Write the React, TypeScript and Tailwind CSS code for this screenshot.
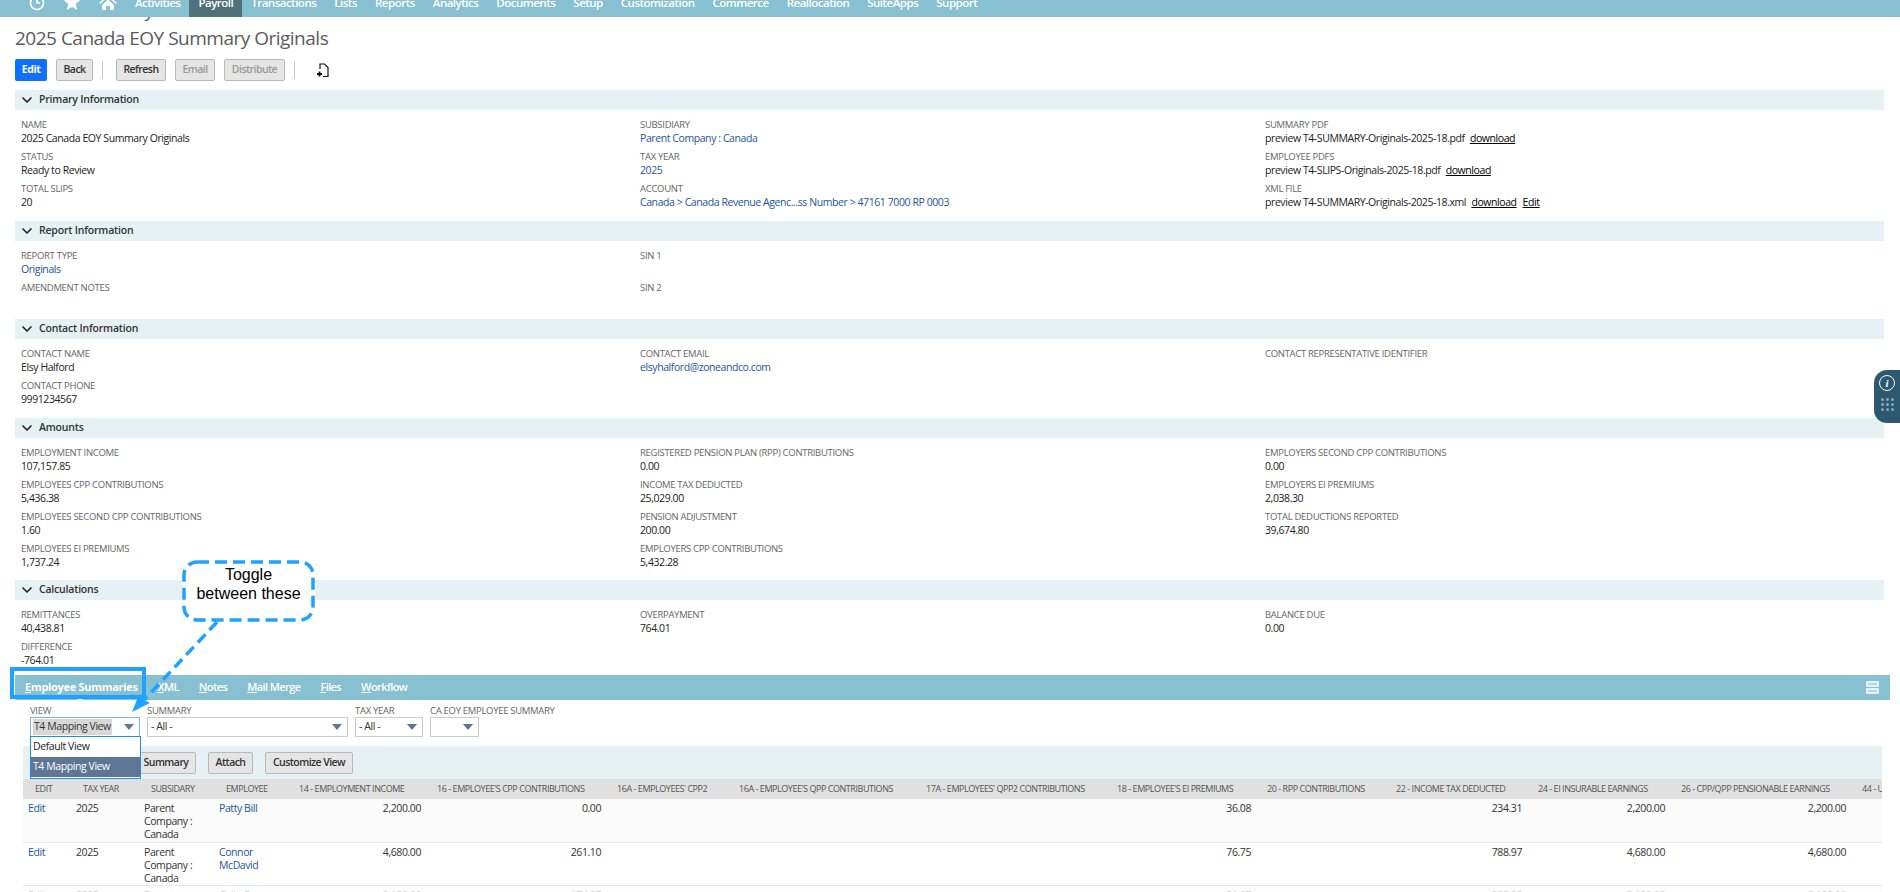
import { ChevronDown } from "lucide-react";

const font = { fontFamily: '"Open Sans", sans-serif' };

const navItems = [
  "Activities",
  "Payroll",
  "Transactions",
  "Lists",
  "Reports",
  "Analytics",
  "Documents",
  "Setup",
  "Customization",
  "Commerce",
  "Reallocation",
  "SuiteApps",
  "Support",
];

type Field = { label: string; value?: React.ReactNode; link?: boolean };

const Dl = ({ name }: { name: string }) => (
  <span className="ml-[3px] text-black underline">{name}</span>
);

const primary: Field[][] = [
  [
    { label: "NAME", value: "2025 Canada EOY Summary Originals" },
    { label: "STATUS", value: "Ready to Review" },
    { label: "TOTAL SLIPS", value: "20" },
  ],
  [
    { label: "SUBSIDIARY", value: "Parent Company : Canada", link: true },
    { label: "TAX YEAR", value: "2025", link: true },
    { label: "ACCOUNT", value: "Canada > Canada Revenue Agenc...ss Number > 47161 7000 RP 0003", link: true },
  ],
  [
    { label: "SUMMARY PDF", value: <>preview T4-SUMMARY-Originals-2025-18.pdf <Dl name="download" /></> },
    { label: "EMPLOYEE PDFS", value: <>preview T4-SLIPS-Originals-2025-18.pdf <Dl name="download" /></> },
    {
      label: "XML FILE",
      value: (
        <>
          preview T4-SUMMARY-Originals-2025-18.xml <Dl name="download" />
          <span className="ml-[6px] text-black underline">Edit</span>
        </>
      ),
    },
  ],
];

const report: Field[][] = [
  [{ label: "REPORT TYPE", value: "Originals", link: true }, { label: "AMENDMENT NOTES" }],
  [{ label: "SIN 1" }, { label: "SIN 2" }],
  [],
];

const contact: Field[][] = [
  [{ label: "CONTACT NAME", value: "Elsy Halford" }, { label: "CONTACT PHONE", value: "9991234567" }],
  [{ label: "CONTACT EMAIL", value: "elsyhalford@zoneandco.com", link: true }],
  [{ label: "CONTACT REPRESENTATIVE IDENTIFIER" }],
];

const amounts: Field[][] = [
  [
    { label: "EMPLOYMENT INCOME", value: "107,157.85" },
    { label: "EMPLOYEES CPP CONTRIBUTIONS", value: "5,436.38" },
    { label: "EMPLOYEES SECOND CPP CONTRIBUTIONS", value: "1.60" },
    { label: "EMPLOYEES EI PREMIUMS", value: "1,737.24" },
  ],
  [
    { label: "REGISTERED PENSION PLAN (RPP) CONTRIBUTIONS", value: "0.00" },
    { label: "INCOME TAX DEDUCTED", value: "25,029.00" },
    { label: "PENSION ADJUSTMENT", value: "200.00" },
    { label: "EMPLOYERS CPP CONTRIBUTIONS", value: "5,432.28" },
  ],
  [
    { label: "EMPLOYERS SECOND CPP CONTRIBUTIONS", value: "0.00" },
    { label: "EMPLOYERS EI PREMIUMS", value: "2,038.30" },
    { label: "TOTAL DEDUCTIONS REPORTED", value: "39,674.80" },
  ],
];

const calculations: Field[][] = [
  [{ label: "REMITTANCES", value: "40,438.81" }, { label: "DIFFERENCE", value: "-764.01" }],
  [{ label: "OVERPAYMENT", value: "764.01" }],
  [{ label: "BALANCE DUE", value: "0.00" }],
];

const columns = [
  { title: "EDIT", w: "w-[48px]" },
  { title: "TAX YEAR", w: "w-[68px]" },
  { title: "SUBSIDARY", w: "w-[75px]" },
  { title: "EMPLOYEE", w: "w-[73px]" },
  { title: "14 - EMPLOYMENT INCOME", w: "w-[138px]" },
  { title: "16 - EMPLOYEE'S CPP CONTRIBUTIONS", w: "w-[180px]" },
  { title: "16A - EMPLOYEES' CPP2", w: "w-[122px]" },
  { title: "16A - EMPLOYEE'S QPP CONTRIBUTIONS", w: "w-[187px]" },
  { title: "17A - EMPLOYEES' QPP2 CONTRIBUTIONS", w: "w-[191px]" },
  { title: "18 - EMPLOYEE'S EI PREMIUMS", w: "w-[150px]" },
  { title: "20 - RPP CONTRIBUTIONS", w: "w-[129px]" },
  { title: "22 - INCOME TAX DEDUCTED", w: "w-[142px]" },
  { title: "24 - EI INSURABLE EARNINGS", w: "w-[143px]" },
  { title: "26 - CPP/QPP PENSIONABLE EARNINGS", w: "w-[181px]" },
  { title: "44 - UNION DUES", w: "w-[100px]" },
];

const rows = [
  { name: "Patty Bill", vals: ["2,200.00", "0.00", "", "", "", "36.08", "", "234.31", "2,200.00", "2,200.00"], bg: "bg-[#fafafa]" },
  { name: "Connor McDavid", vals: ["4,680.00", "261.10", "", "", "", "76.75", "", "788.97", "4,680.00", "4,680.00"], bg: "bg-white" },
  { name: "Colin Fraser", vals: ["3,120.00", "174.07", "", "", "", "51.17", "", "525.98", "3,120.00", "3,120.00"], bg: "bg-[#fafafa] opacity-25" },
];

const Section = ({ title, fields, height }: { title: string; fields: Field[][]; height: string }) => (
  <div>
    <div className="flex h-[20px] items-center bg-[#e6f1f3] pl-[4px] text-[10.5px] font-semibold tracking-[-0.2px] text-[#333]">
      <ChevronDown size={16} strokeWidth={2.5} className="mr-[4px] text-[#222]" />
      {title}
    </div>
    <div className={`grid grid-cols-[619px_625px_1fr] pl-[6px] pt-[8px] ${height}`}>
      {fields.map((col, i) => (
        <div key={i}>
          {col.map((f) => (
            <div key={f.label} className="h-[32px]">
              <div className="h-[13px] text-[9.5px] leading-[13px] tracking-[-0.3px] text-[#666]">{f.label}</div>
              <div className={`h-[14px] text-[10.5px] leading-[14px] tracking-[-0.42px] ${f.link ? "text-[#255599]" : "text-[#222]"}`}>
                {f.value}
              </div>
            </div>
          ))}
        </div>
      ))}
    </div>
  </div>
);

const Btn = ({ label, w, disabled }: { label: string; w: string; disabled?: boolean }) => (
  <button
    className={`block h-[22px] shrink-0 rounded-[2px] border border-[#b9b9b9] bg-[#e5e5e5] text-[10.5px] font-semibold tracking-[-0.55px] ${w} ${
      disabled ? "text-[#999]" : "text-[#333]"
    }`}
  >
    {label}
  </button>
);

const Select = ({ label, value, w, focused }: { label: string; value: string; w: string; focused?: boolean }) => (
  <div className={w}>
    <div className="h-[12px] whitespace-nowrap text-[9.5px] leading-[12px] tracking-[-0.3px] text-[#666]">{label}</div>
    <div
      className={`flex h-[20px] items-center justify-between border pl-[2px] pr-[5px] text-[10.5px] tracking-[-0.42px] text-[#333] ${
        focused ? "border-[#7fb5e6]" : "border-[#ccc]"
      }`}
    >
      <span className={focused ? "bg-[#d8d8d8] px-[1px]" : "px-[1px]"}>{value}</span>
      <svg width="10" height="6" viewBox="0 0 10 6">
        <path d="M0 0h10L5 6z" fill="#5f7596" />
      </svg>
    </div>
  </div>
);

export default function App() {
  return (
    <div style={font} className="relative h-[892px] w-[1900px] overflow-hidden bg-white">
      {/* top nav, scrolled so it is cut off at the top */}
      <div className="flex h-[17px] items-end bg-[#86c0d1] pl-[29px] text-white">
        <div className="flex w-[97px] items-end gap-[19px] pb-[4px]">
          <svg width="16" height="16" viewBox="0 0 16 16" fill="none" stroke="white" strokeWidth="1.6">
            <circle cx="8" cy="6" r="6.500" />
            <path d="M8 2v4h3" />
          </svg>
          <svg width="16" height="16" viewBox="0 0 16 16" fill="white" className="overflow-visible">
            <path d="M8-3l2.400 5.600 6 .5-4.600 4 1.400 5.900L8 9.900l-5.200 3.100 1.400-5.900-4.600-4 6-.5z" />
          </svg>
          <svg width="18" height="16" viewBox="0 0 18 16" fill="white" className="overflow-visible">
            <path d="M9-2L0 6l1 1 8-7 8 7 1-1zM3 8v5h4V9h4v4h4V8L9 2.500z" />
          </svg>
        </div>
        <div className="flex items-end text-[11.5px] font-semibold leading-[16px] tracking-[-0.5px]">
          {navItems.map((item) => (
            <div
              key={item}
              className={
                item === "Payroll"
                  ? "h-[17px] shrink-0 bg-[#4f727a] px-[9px] pb-[6px]"
                  : "shrink-0 px-[9px] pb-[6px]"
              }
            >
              <div className="flex h-[11px] items-end">{item}</div>
            </div>
          ))}
        </div>
      </div>

      {/* breadcrumb hidden behind the nav, only its descender shows */}
      <div className="h-[4px] overflow-hidden pl-[33px]">
        <div className="-mt-[21px] whitespace-nowrap text-[19px] leading-[28px] tracking-[-0.5px] text-[#4a5a78]">EOY Summary</div>
      </div>

      <h1 className="ml-[15px] mt-[3px] h-[28px] text-[19px] font-normal leading-[28px] tracking-[-0.5px] text-[#5a5a5a]">
        2025 Canada EOY Summary Originals
      </h1>

      <div className="ml-[15px] mt-[7px] flex h-[22px] items-center">
        <button className="block h-[22px] w-[32px] rounded-[2px] bg-[#0f6fff] text-[10.5px] font-bold tracking-[-0.4px] text-white">Edit</button>
        <div className="ml-[9px]"><Btn label="Back" w="w-[37px]" /></div>
        <div className="ml-[9px] mr-[13px] h-[18px] w-px bg-[#ccc]" />
        <Btn label="Refresh" w="w-[50px]" />
        <div className="ml-[9px]"><Btn label="Email" w="w-[40px]" disabled /></div>
        <div className="ml-[9px]"><Btn label="Distribute" w="w-[61px]" disabled /></div>
        <div className="ml-[9px] h-[18px] w-px bg-[#ccc]" />
        <svg className="ml-[21px]" width="13" height="15" viewBox="0 0 13 15" fill="none" stroke="#111" strokeWidth="1.2">
          <path d="M4 6V1h4.500l3.500 3.500V13.500H7" />
          <path d="M3.500 8.500v5M1 11h5" strokeWidth="1.800" />
        </svg>
      </div>

      <div className="ml-[15px] mr-[16px] mt-[9px]">
        <Section title="Primary Information" fields={primary} height="h-[111px]" />
        <Section title="Report Information" fields={report} height="h-[78px]" />
        <Section title="Contact Information" fields={contact} height="h-[79px]" />
        <Section title="Amounts" fields={amounts} height="h-[142px]" />
        <Section title="Calculations" fields={calculations} height="h-[75px]" />
      </div>

      {/* sublist tabs */}
      <div className="relative ml-[15px] mr-[10px] flex h-[25px] items-center justify-between bg-[#86c0d1] pl-[10px] pr-[11px] text-[11px] font-semibold tracking-[-0.6px] text-white">
        <div className="flex gap-[20px]">
          <span className="font-bold tracking-[-0.3px]"><u>E</u>mployee Summaries</span>
          <span><u>X</u>ML</span>
          <span><u>N</u>otes</span>
          <span><u>M</u>ail Merge</span>
          <span><u>F</u>iles</span>
          <span><u>W</u>orkflow</span>
        </div>
        <svg className="absolute bottom-0 left-[62px]" width="6" height="3" viewBox="0 0 6 3" fill="white">
          <path d="M0 3L3 0l3 3z" />
        </svg>
        <svg width="13" height="13" viewBox="0 0 13 13" fill="#e6f1f3">
          <rect width="13" height="6" rx="1" />
          <rect y="7" width="13" height="6" rx="1" />
          <path d="M2 2.500h9v1H2zM2 9.500h9v1H2z" fill="#86c0d1" />
        </svg>
      </div>

      {/* filters */}
      <div className="ml-[30px] mt-[5px] flex h-[41px] gap-[7px]">
        <Select label="VIEW" value="T4 Mapping View" w="w-[110px]" focused />
        <Select label="SUMMARY" value="- All -" w="w-[201px]" />
        <Select label="TAX YEAR" value="- All -" w="w-[68px]" />
        <Select label="CA EOY EMPLOYEE SUMMARY" value="" w="w-[49px]" />
      </div>

      <div className="ml-[23px] mr-[18px] flex h-[33px] items-center gap-[12px] bg-[#e6f1f3] pl-[5px]">
        <div className="flex w-[168px] justify-end"><Btn label="Summary" w="w-[60px]" /></div>
        <Btn label="Attach" w="w-[45px]" />
        <Btn label="Customize View" w="w-[88px]" />
      </div>

      <div className="ml-[23px] mr-[18px] overflow-hidden">
        <table className="w-[1927px] table-fixed border-collapse text-[#333]">
          <thead>
            <tr className="h-[20px] bg-[#e0e0e0]">
              {columns.map((c) => (
                <th key={c.title} className={`${c.w} whitespace-nowrap pl-[12px] text-left text-[9px] font-normal tracking-[-0.45px] text-[#555]`}>
                  {c.title}
                </th>
              ))}
            </tr>
          </thead>
          <tbody className="text-[10.5px] leading-[13px] tracking-[-0.42px]">
            {rows.map((r) => (
              <tr key={r.name} className={`h-[43px] border-b border-[#e8e8e8] align-top ${r.bg}`}>
                <td className="pl-[5px] pt-[3px] text-[#255599]">Edit</td>
                <td className="pl-[5px] pt-[3px]">2025</td>
                <td className="pl-[5px] pt-[3px]">Parent Company : Canada</td>
                <td className="pl-[5px] pr-[10px] pt-[3px] text-[#255599]">{r.name}</td>
                {r.vals.map((v, i) => (
                  <td key={i} className="pr-[4px] pt-[3px] text-right">{v}</td>
                ))}
                <td />
              </tr>
            ))}
          </tbody>
        </table>
      </div>

      {/* open dropdown of the view select */}
      <div className="absolute left-[30px] top-[736px] w-[111px] border border-[#1a8cff] bg-white text-[10.5px] tracking-[-0.42px]">
        <div className="flex h-[20px] items-center pl-[2px] text-[#222]">Default View</div>
        <div className="mb-px flex h-[20px] items-center bg-[#5f7596] pl-[2px] text-white">T4 Mapping View</div>
      </div>

      {/* side widget */}
      <div className="absolute left-[1874px] top-[370px] flex h-[53px] w-[26px] flex-col items-center rounded-l-[13px] bg-[#2b5a70] pt-[5px]">
        <div className="flex h-[16px] w-[16px] items-center justify-center rounded-full border border-white text-[11px] font-bold italic leading-none text-white" style={{ fontFamily: '"Liberation Serif", serif' }}>
          i
        </div>
        <div className="mt-[7px] grid grid-cols-3 gap-[2px]">
          {Array.from({ length: 9 }).map((_, i) => (
            <div key={i} className="h-[3px] w-[3px] rounded-full bg-[#8fa5b0]" />
          ))}
        </div>
      </div>

      {/* annotation */}
      <div
        className="absolute left-[182px] top-[560px] flex h-[62px] w-[133px] flex-col items-center justify-center rounded-[14px] bg-white pb-[14px] text-[16px] leading-[19px] text-black"
        style={{ fontFamily: '"Liberation Sans", sans-serif' }}
      >
        <svg className="absolute inset-0" width="133" height="62" viewBox="0 0 133 62" fill="none">
          <rect x="2" y="2" width="129" height="58" rx="13" stroke="#1fa2ff" strokeWidth="3.500" strokeDasharray="12 6" />
        </svg>
        <div>Toggle</div>
        <div>between these</div>
      </div>
      <div className="absolute left-[10px] top-[667px] h-[32px] w-[136px] border-4 border-[#1fa2ff]" />
      <svg className="pointer-events-none absolute left-[125px] top-[618px]" width="100" height="100" viewBox="0 0 100 100" fill="none">
        <path d="M92 4L19 82" stroke="#1fa2ff" strokeWidth="3.500" strokeDasharray="11 6" />
        <path d="M7 94L13 79L25 85z" fill="#1fa2ff" />
      </svg>
    </div>
  );
}
